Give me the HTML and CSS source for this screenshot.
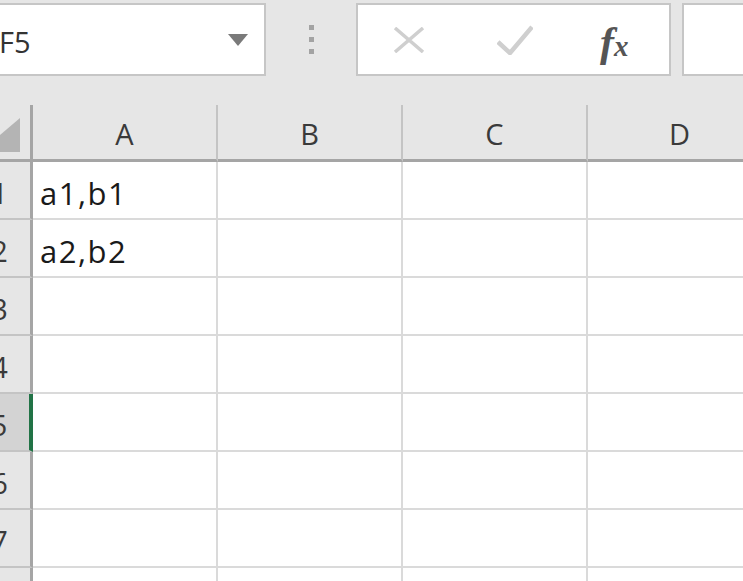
FILE: index.html
```html
<!DOCTYPE html>
<html lang="en">
<head>
  <meta charset="UTF-8">
  <title>Sheet1</title>
  <link rel="stylesheet" href="styles.css">
</head>
<body>
<div class="toolbar">
  <div class="namebox">
    <span class="name">F5</span>
    <svg class="caret" width="20" height="12" viewBox="0 0 20 12"><polygon points="0,0 20,0 10,12" fill="#7a7a7a"/></svg>
  </div>
  <div class="grip"><i></i><i></i><i></i></div>
  <div class="fbox">
    <svg class="cancel" width="32" height="26" viewBox="0 0 32 26">
      <path d="M2 1 L30 25 M30 1 L2 25" stroke="#cfcfcf" stroke-width="3.5" fill="none"/>
    </svg>
    <svg class="enter" width="36" height="30" viewBox="0 0 36 30">
      <path d="M1 17 L13 28 L35 2" stroke="#cfcfcf" stroke-width="4.5" fill="none"/>
    </svg>
    <span class="fx">fx</span>
  </div>
  <div class="formula"></div>
</div>

<div class="sheet">
  <div class="corner"><svg width="40" height="34" viewBox="0 0 40 34"><polygon points="0,34 40,34 40,0" fill="#b4b4b4"/></svg></div>
  <div class="col-head">A</div>
  <div class="col-head">B</div>
  <div class="col-head">C</div>
  <div class="col-head">D</div>

  <div class="row-head">1</div>
  <div class="cell">a1,b1</div><div class="cell"></div><div class="cell"></div><div class="cell"></div>

  <div class="row-head">2</div>
  <div class="cell">a2,b2</div><div class="cell"></div><div class="cell"></div><div class="cell"></div>

  <div class="row-head">3</div>
  <div class="cell"></div><div class="cell"></div><div class="cell"></div><div class="cell"></div>

  <div class="row-head">4</div>
  <div class="cell"></div><div class="cell"></div><div class="cell"></div><div class="cell"></div>

  <div class="row-head active">5</div>
  <div class="cell"></div><div class="cell"></div><div class="cell"></div><div class="cell"></div>

  <div class="row-head">6</div>
  <div class="cell"></div><div class="cell"></div><div class="cell"></div><div class="cell"></div>

  <div class="row-head">7</div>
  <div class="cell"></div><div class="cell"></div><div class="cell"></div><div class="cell"></div>

  <div class="row-head">8</div>
  <div class="cell"></div><div class="cell"></div><div class="cell"></div><div class="cell"></div>
</div>
</body>
</html>
```

FILE: styles.css
```css
* {
  box-sizing: border-box;
}

html, body {
  width: 100%;
  height: 100%;
  overflow: hidden;
  margin: 0;
  padding: 0;
  background: #e6e6e6;
  font-family: "Open Sans", sans-serif;
  color: #222;
}

/* formula bar */

.toolbar {
  display: flex;
  align-items: flex-start;
  height: 105px;
  padding-top: 3px;
}

.namebox {
  display: flex;
  align-items: center;
  flex: none;
  width: 290px;
  height: 73px;
  margin-left: -24px;
  padding-left: 21px;
  background: #fff;
  border: 2px solid #c6c6c6;
}

.namebox .name {
  font-size: 29px;
  color: #333;
  padding-top: 3px;
}

.namebox .caret {
  margin-left: auto;
  margin-right: 16px;
}

.grip {
  display: flex;
  flex-direction: column;
  align-items: center;
  gap: 7px;
  flex: none;
  width: 90px;
  padding-top: 22px;
}

.grip i {
  width: 5px;
  height: 5px;
  background: #a3a3a3;
}

.fbox {
  display: flex;
  align-items: center;
  flex: none;
  width: 315px;
  height: 73px;
  padding-left: 35px;
  background: #fff;
  border: 2px solid #c6c6c6;
}

.fbox .enter {
  margin-left: 72px;
}

/* fx glyph: tall f, small x */
.fbox .fx {
  margin-left: 67px;
  padding-top: 4px;
  font-family: "Liberation Serif", serif;
  font-style: italic;
  font-weight: bold;
  font-size: 29px;
  color: #555;
  line-height: 1;
}

.fbox .fx::first-letter {
  font-size: 42px;
}

.formula {
  flex: 1;
  height: 73px;
  margin-left: 11px;
  margin-right: -10px;
  background: #fff;
  border: 2px solid #c6c6c6;
}

/* grid */

.sheet {
  display: grid;
  grid-template-columns: 70px repeat(4, 185px);
  grid-template-rows: 57px repeat(8, 58px);
  margin-left: -37px;
}

.corner,
.col-head,
.row-head {
  background: #e6e6e6;
  color: #3a3a3a;
  font-size: 29px;
}

.corner {
  display: flex;
  justify-content: flex-end;
  align-items: flex-end;
  padding-right: 10px;
  padding-bottom: 7px;
  border-right: 3px solid #a5a5a5;
  border-bottom: 3px solid #a5a5a5;
}

.col-head {
  display: flex;
  align-items: center;
  justify-content: center;
  padding-top: 3px;
  border-right: 2px solid #c4c4c4;
  border-bottom: 3px solid #a5a5a5;
}

.row-head {
  display: flex;
  align-items: center;
  justify-content: center;
  padding-top: 5px;
  padding-left: 6px;
  border-right: 3px solid #a5a5a5;
  border-bottom: 2px solid #c4c4c4;
}

.row-head.active {
  background: #d3d3d3;
  border-right: 4px solid #217346;
}

.cell {
  display: flex;
  align-items: center;
  padding-left: 7px;
  padding-top: 5px;
  background: #fff;
  border-right: 2px solid #dadada;
  border-bottom: 2px solid #dadada;
  font-size: 31px;
  letter-spacing: 1.5px;
  color: #1a1a1a;
  white-space: nowrap;
}
```
